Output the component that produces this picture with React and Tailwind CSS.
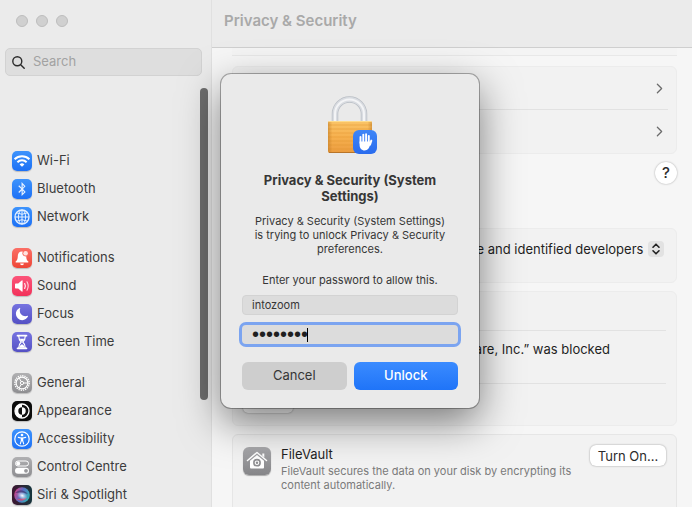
import React, { useState } from "react";
import { FaBluetoothB } from "react-icons/fa";
import { IoMoon } from "react-icons/io5";
import { ChevronRight } from "lucide-react";

const BLUE = "bg-linear-to-b from-[#3d93fc] to-[#1d70f5]";
const PURPLE = "bg-linear-to-b from-[#7673e0] to-[#5450c4]";
const GREY = "bg-linear-to-b from-[#b0b0b2] to-[#8e8e91]";

const WifiGlyph = () => (
   <svg viewBox="0 0 20 20" className="size-5" fill="none" stroke="#fff" strokeWidth="2">
      <path d="M2.6 8.3a10.6 10.6 0 0 1 14.8 0" />
      <path d="M5.4 11.2a6.6 6.6 0 0 1 9.2 0" />
      <path d="M10 15.8 7.6 13.4a3.4 3.4 0 0 1 4.8 0Z" fill="#fff" stroke="none" />
   </svg>
);

const GlobeGlyph = () => (
   <svg viewBox="0 0 20 20" className="size-5" fill="none" stroke="#e6f1ff" strokeWidth="1">
      <circle cx="10" cy="10" r="7" strokeWidth="1.3" />
      <ellipse cx="10" cy="10" rx="3.6" ry="7" />
      <path d="M10 3v14M3 10h14M4.6 5.8q5.4 3 10.8 0M4.6 14.2q5.4-3 10.8 0" />
   </svg>
);

const BellGlyph = () => (
   <svg viewBox="0 0 20 20" className="size-5" fill="#fff">
      <path d="M10 3.4c-3 0-4.1 2.1-4.2 4.8C5.7 11 5.3 12 3.9 13.3c-.6.6-.3 1.3.5 1.3h11.2c.8 0 1.1-.7.5-1.3-1.4-1.3-1.8-2.3-1.9-5.1C14.1 5.5 13 3.4 10 3.4Z" />
      <path d="M8.1 15.5h3.8a1.9 1.7 0 0 1-3.8 0Z" />
      <circle cx="13.6" cy="5.2" r="3.2" fill="#f9695c" />
      <circle cx="13.6" cy="5.2" r="2.3" fill="#ffe3df" />
   </svg>
);

const SoundGlyph = () => (
   <svg viewBox="0 0 20 20" className="size-5" fill="none" stroke="#fff" strokeLinecap="round">
      <path d="M3 8.2q0-.7.7-.7h2.5l3.500-3q.9-.6.9.5v10q0 1.100-.9.500l-3.500-3H3.700q-.7 0-.7-.7Z" fill="#fff" stroke="none" />
      <path d="M12.7 7.5q1.3 2.5 0 5" strokeWidth="1.1" />
      <path d="M15 5.8q2.4 4.2 0 8.4" strokeWidth="1.1" opacity=".75" />
   </svg>
);

const HourglassGlyph = () => (
   <svg viewBox="0 0 20 20" className="size-5" fill="none" stroke="#fff" strokeWidth="1.2">
      <path d="M5.5 3.7h9M5.5 16.3h9" strokeWidth="1.7" strokeLinecap="round" />
      <path d="M6.7 4c0 3.2.7 4.3 2.5 6-1.8 1.7-2.5 2.8-2.5 6M13.3 4c0 3.2-.7 4.3-2.5 6 1.8 1.7 2.5 2.8 2.5 6" />
      <path d="M7.6 6.7h4.8L10 10Z M7.2 15.700c.2-1.500 1-2.400 2.800-3.500 1.800 1.100 2.600 2 2.800 3.500Z" fill="#fff" stroke="none" />
   </svg>
);

const GearGlyph = () => (
   <svg viewBox="0 0 20 20" className="size-5" fill="none" stroke="#fff">
      <circle cx="10" cy="10" r="7.2" strokeWidth="1.4" strokeDasharray="1.3 0.96" />
      <circle cx="10" cy="10" r="5.9" strokeWidth="1.2" />
      <circle cx="10" cy="10" r="1.6" strokeWidth="1" />
      <path d="M11.6 10h4M9.2 8.6 7.2 5.1M9.2 11.4l-2 3.5" strokeWidth="1" />
   </svg>
);

const AppearanceGlyph = () => (
   <svg viewBox="0 0 20 20" className="size-5">
      <circle cx="10" cy="10" r="7" fill="#111" stroke="#fff" strokeWidth="1.3" />
      <path d="M10 3a7 7 0 0 0 0 14Z" fill="#fff" />
      <path d="M10 6.3a3.7 3.7 0 0 0 0 7.4Z" fill="#111" />
      <path d="M10 6.3a3.7 3.7 0 0 1 0 7.4Z" fill="#fff" />
   </svg>
);

const AccessGlyph = () => (
   <svg viewBox="0 0 20 20" className="size-5" fill="none" stroke="#fff" strokeLinecap="round">
      <circle cx="10" cy="10" r="7.2" strokeWidth="1.2" />
      <circle cx="10" cy="6" r="1.3" fill="#fff" stroke="none" />
      <path d="M6.3 8.4 9 9h2l2.7-.6M9.3 9.3v2.4l-1 3.2M10.7 9.3v2.4l1 3.2" strokeWidth="1.1" />
      <path d="M9 8.8h2v3.5H9Z" fill="#fff" stroke="none" />
   </svg>
);

const ControlGlyph = () => (
   <svg viewBox="0 0 20 20" className="size-5">
      <rect x="3.5" y="4" width="13" height="5" rx="2.5" fill="none" stroke="#fff" strokeWidth="1" />
      <circle cx="6.2" cy="6.5" r="2" fill="#fff" />
      <rect x="3" y="10.8" width="14" height="6" rx="3" fill="#fff" />
      <circle cx="14" cy="13.8" r="1.9" fill="#98989b" />
   </svg>
);

const SiriGlyph = () => (
   <svg viewBox="0 0 20 20" className="size-5">
      <defs>
         <linearGradient id="siriOrb" x1="0" y1="0.3" x2="1" y2="0.7">
            <stop offset="0" stopColor="#d83f86" />
            <stop offset=".45" stopColor="#5a6fc4" />
            <stop offset="1" stopColor="#2fb9b4" />
         </linearGradient>
         <radialGradient id="siriCore">
            <stop offset="0" stopColor="#fff" />
            <stop offset="1" stopColor="#bfe4ff" stopOpacity="0" />
         </radialGradient>
      </defs>
      <circle cx="10" cy="10" r="7.8" fill="url(#siriOrb)" />
      <path d="M3 8q6-6 13 1-6-2-13-1Z" fill="#3a2d66" opacity=".6" />
      <path d="M5 14q5 4 10-1-4 .5-10 1Z" fill="#e0486e" opacity=".8" />
      <ellipse cx="10.5" cy="10.5" rx="5.5" ry="4" fill="url(#siriCore)" transform="rotate(25 10 10)" />
   </svg>
);

const HandGlyph = () => (
   <svg viewBox="0 0 24 24" className="size-6" fill="none" stroke="#fff" strokeLinecap="round" strokeLinejoin="round">
      <path d="M7.5 7v6M10.3 4.6V12M13.1 4.2V12M15.8 6v7" strokeWidth="1.9" />
      <path d="m18.3 10.6-1.3 4.2" strokeWidth="2" />
      <path d="M6.6 11.5h10.1l1 1.5-.7 2.3c-.8 3-2.4 5.2-5.3 5.2-3.100 0-5.100-2.500-5.100-5.500Z" fill="#fff" stroke="none" />
   </svg>
);

const LockArt = () => (
   <svg viewBox="0 0 46 58" className="h-[58px] w-[46px]">
      <defs>
         <linearGradient id="brass" x1="0" y1="0" x2="0" y2="1">
            <stop offset="0" stopColor="#fac468" />
            <stop offset=".5" stopColor="#f6b04e" />
            <stop offset="1" stopColor="#eb9c40" />
         </linearGradient>
         <linearGradient id="brassEdge" x1="0" y1="0" x2="1" y2="0">
            <stop offset="0" stopColor="#b87420" stopOpacity=".5" />
            <stop offset=".1" stopColor="#b87420" stopOpacity="0" />
            <stop offset=".9" stopColor="#b87420" stopOpacity="0" />
            <stop offset="1" stopColor="#b87420" stopOpacity=".5" />
         </linearGradient>
      </defs>
      <path d="M8.500 25V17.500a14.500 14.500 0 0 1 29 0V25" transform="translate(-.5 .5)" fill="none" stroke="#b9bec5" strokeWidth="6.500" />
      <path d="M8.500 25V17.500a14.500 14.500 0 0 1 29 0V25" transform="translate(-.5 .5)" fill="none" stroke="#d9dce1" strokeWidth="5" />
      <path d="M8.500 25V17.500a14.500 14.500 0 0 1 29 0V25" transform="translate(-.5 .5)" fill="none" stroke="#f3f4f6" strokeWidth="2" />
      <rect x="1" y="25" width="44" height="32" rx="2" fill="url(#brass)" />
      <path d="M1 29h44M1 33h44M1 37h44M1 41h44M1 45h44M1 49h44M1 53h44" stroke="#dd922f" strokeOpacity=".45" strokeWidth="1" />
      <rect x="1" y="25" width="44" height="32" rx="2" fill="url(#brassEdge)" />
      <path d="M1.5 25.5h43" stroke="#ffdc8c" strokeWidth="1" />
      <path d="M2 56.5h42" stroke="#b8752a" strokeWidth="1" />
   </svg>
);

const VaultGlyph = () => (
   <svg viewBox="0 0 28 28" className="size-7" fill="none" stroke="#fff">
      <path d="M4.5 13.5 14 5.5l9.5 8" strokeWidth="1.5" strokeLinecap="round" strokeLinejoin="round" />
      <path d="M19.3 6.5h2v4l-2-1.7Z" fill="#fff" stroke="none" />
      <path d="M7 13.800 14 8l7 5.800v6.700q0 1-1 1H8q-1 0-1-1Z" fill="#fff" stroke="none" />
      <circle cx="14" cy="15.7" r="3.1" stroke="#8f8f92" strokeWidth="1.6" />
      <circle cx="14" cy="15.7" r="1.2" fill="#8f8f92" stroke="none" />
   </svg>
);

const groups = [
   [
      { label: "Wi-Fi", tile: BLUE, icon: <WifiGlyph /> },
      { label: "Bluetooth", tile: BLUE, icon: <FaBluetoothB size={14} color="#e6f1ff" /> },
      { label: "Network", tile: BLUE, icon: <GlobeGlyph /> },
   ],
   [
      { label: "Notifications", tile: "bg-linear-to-b from-[#fb6f66] to-[#ee4435]", icon: <BellGlyph /> },
      { label: "Sound", tile: "bg-linear-to-b from-[#fc5479] to-[#f2305a]", icon: <SoundGlyph /> },
      { label: "Focus", tile: PURPLE, icon: <IoMoon size={14} color="#fff" /> },
      { label: "Screen Time", tile: PURPLE, icon: <HourglassGlyph /> },
   ],
   [
      { label: "General", tile: GREY, icon: <GearGlyph /> },
      { label: "Appearance", tile: "bg-[#0c0c0c]", icon: <AppearanceGlyph /> },
      { label: "Accessibility", tile: BLUE, icon: <AccessGlyph /> },
      { label: "Control Centre", tile: GREY, icon: <ControlGlyph /> },
      { label: "Siri & Spotlight", tile: "bg-linear-to-r from-[#3a1430] to-[#12343c]", icon: <SiriGlyph /> },
   ],
];

const Sidebar = () => (
   <aside className="relative w-[212px] shrink-0 overflow-hidden border-r border-[#e0e0e0] bg-[#ebebeb]">
      <div className="flex gap-2 px-4 pt-[15px]">
         <button aria-label="Close" className="size-3 rounded-full border border-[#bdbdbd] bg-[#d0d0d0]" />
         <button aria-label="Minimise" className="size-3 rounded-full border border-[#bdbdbd] bg-[#d0d0d0]" />
         <button aria-label="Zoom" className="size-3 rounded-full border border-[#bdbdbd] bg-[#d0d0d0]" />
      </div>
      <label className="mt-[21px] mr-[9px] ml-[5px] flex h-7 items-center gap-2 rounded-[5px] border border-[#d2d2d2] bg-[#dedede] pl-1.5">
         <svg viewBox="0 0 13 13" className="size-[13px] shrink-0" fill="none" stroke="#2c2c2c" strokeWidth="1.4" strokeLinecap="round">
            <circle cx="5.3" cy="5.3" r="4.5" />
            <path d="m8.7 8.7 3.5 3.5" />
         </svg>
         <input
            type="text"
            aria-label="Search"
            placeholder="Search"
            className="w-full min-w-0 bg-transparent text-[13px] outline-none placeholder:text-[#a2a2a2]"
         />
      </label>
      <nav className="mt-[71px] flex flex-col gap-[13px] pl-3">
         {groups.map((group, i) => (
            <ul key={i}>
               {group.map((item) => (
                  <li key={item.label}>
                     <a href="#" className="flex h-7 items-center gap-[5px] text-[13px] text-[#3c3c3c]">
                        <span className={`flex size-5 items-center justify-center rounded-[5px] shadow-[0_1px_1px_rgba(0,0,0,0.2)] ${item.tile}`}>
                           {item.icon}
                        </span>
                        {item.label}
                     </a>
                  </li>
               ))}
            </ul>
         ))}
      </nav>
      <div className="absolute top-[88px] right-[3px] h-[312px] w-2 rounded-full bg-[#6e6e6e]" />
   </aside>
);

const Content = () => (
   <main className="flex min-w-0 flex-1 flex-col bg-[#f6f6f6]">
      <header className="h-12 shrink-0 border-b border-[#cfcfcf] bg-[#ebebeb] px-3 pt-[11px]">
         <h1 className="text-[15px] leading-5 font-semibold text-[#a9a9a9]">Privacy &amp; Security</h1>
      </header>
      <div className="flex flex-col pr-[15px] pl-5">
         <div className="h-2 border-b border-[#e8e8e8] bg-[#f4f4f4]" />
         <section className="mt-2.5 rounded-md border border-[#ececec] bg-[#f2f2f2] pr-2 pl-2.5">
            <button aria-label="Open first row" className="flex h-[43px] w-full items-center justify-end border-b border-[#e2e2e2]">
               <ChevronRight size={17} strokeWidth={1.8} color="#6c6c6c" />
            </button>
            <button aria-label="Open second row" className="flex h-[43px] w-full items-center justify-end">
               <ChevronRight size={17} strokeWidth={1.8} color="#6c6c6c" />
            </button>
         </section>
         <button className="mt-2 size-[22px] self-end rounded-full bg-white text-[15px] leading-[22px] font-medium text-[#2b2b2b] shadow-[0_0_2px_rgba(0,0,0,0.35)]">
            ?
         </button>
         <section className="mt-[44px] flex h-[55px] items-start justify-end rounded-md border border-[#ececec] bg-[#f2f2f2] pt-3 pr-3">
            <div className="relative flex items-center">
               <select
                  aria-label="Allow applications downloaded from"
                  className="h-4 appearance-none bg-transparent pr-5 text-[13px] leading-4 text-[#1f1f1f] outline-none"
               >
                  <option>App Store and identified developers</option>
               </select>
               <span className="pointer-events-none absolute right-0 flex size-4 items-center justify-center rounded-sm bg-[#e2e2e2]">
                  <svg viewBox="0 0 16 16" className="size-4" fill="none" stroke="#222" strokeWidth="1.6" strokeLinecap="round" strokeLinejoin="round">
                     <path d="m5 6.2 3-3 3 3M5 9.8l3 3 3-3" />
                  </svg>
               </span>
            </div>
         </section>
         <section className="mt-2 rounded-md border border-[#ececec] bg-[#f2f2f2] px-2.5">
            <div className="h-[39px] border-b border-[#e2e2e2]" />
            <p className="h-[53px] border-b border-[#e2e2e2] pt-2.5 pr-14 text-right text-[13px] leading-4 text-[#1f1f1f]">
               “VMware, Inc.” was blocked
            </p>
            <div className="h-[41px] pt-2">
               <button aria-label="Allow" className="block h-[21px] w-[50px] rounded-[5px] bg-white shadow-[0_0_2px_rgba(0,0,0,0.4)]" />
            </div>
         </section>
         <section className="mt-2 flex min-h-[84px] items-start rounded-md border border-[#e6e6e6] bg-[#f2f2f2] px-2.5 pt-3">
            <span className="flex size-7 shrink-0 items-center justify-center rounded-md bg-linear-to-b from-[#a9a9ac] to-[#858588] shadow-[0_1px_1px_rgba(0,0,0,0.3)]">
               <VaultGlyph />
            </span>
            <div className="-mt-px ml-2.5 flex-1">
               <h2 className="text-[13px] leading-4 text-[#1f1f1f]">FileVault</h2>
               <p className="mt-0.5 text-[11px] leading-[14px] text-[#7a7a7a]">
                  FileVault secures the data on your disk by encrypting its
                  <br />
                  content automatically.
               </p>
            </div>
            <button className="-mt-0.5 h-[21px] w-[76px] shrink-0 rounded-md bg-white text-[13px] leading-5 text-[#2b2b2b] shadow-[0_0_2px_rgba(0,0,0,0.4)]">
               Turn On...
            </button>
         </section>
      </div>
   </main>
);

const UnlockDialog = () => {
   const [username, setUsername] = useState("intozoom");
   const [password, setPassword] = useState("password");

   return (
      <div className="absolute inset-0 flex items-start justify-center pt-[74px] pl-2">
         <form
            role="dialog"
            aria-labelledby="dialog-title"
            onSubmit={(e) => e.preventDefault()}
            className="flex w-[258px] flex-col rounded-[10px] bg-[#eaeaea] px-[21px] pt-[22px] pb-[18px] text-center text-[#363636] shadow-[0_0_0_1px_rgba(0,0,0,0.3),0_14px_40px_rgba(0,0,0,0.5)]"
         >
            <div className="relative self-center">
               <LockArt />
               <span className="absolute -right-1 bottom-0 flex size-6 items-center justify-center rounded-md bg-linear-to-b from-[#3f86f7] to-[#2a6cee]">
                  <HandGlyph />
               </span>
            </div>
            <h2 id="dialog-title" className="mt-[18px] text-[13px] leading-4 font-bold">
               Privacy &amp; Security (System
               <br />
               Settings)
            </h2>
            <p className="mt-2.5 text-[11px] leading-[14px]">
               Privacy &amp; Security (System Settings)
               <br />
               is trying to unlock Privacy &amp; Security
               <br />
               preferences.
            </p>
            <p className="mt-[17px] text-[11px] leading-[14px]">Enter your password to allow this.</p>
            <input
               type="text"
               aria-label="User name"
               className="mt-2 h-5 w-full rounded-sm border border-[#d3d3d3] bg-[#dcdcdc] px-[9px] text-[11px] outline-none"
               value={username}
               onChange={(e) => setUsername(e.target.value)}
            />
            <div className="relative mt-2.5 flex h-[19px] items-center rounded-sm bg-[#dcdcdc] ring-[3px] ring-[#7ba4f0]">
               <input
                  type="password"
                  aria-label="Password"
                  className="h-[19px] w-full bg-transparent px-2.5 font-['Liberation_Sans',sans-serif] text-[20px] leading-[19px] text-[#1f1f1f] outline-none"
                  value={password}
                  onChange={(e) => setPassword(e.target.value)}
               />
               <span className="absolute left-[65px] h-3.5 w-px bg-black" />
            </div>
            <div className="mt-[18px] flex gap-[7px]">
               <button type="button" className="h-7 flex-1 rounded-md bg-[#cecece] text-[13px]">
                  Cancel
               </button>
               <button type="submit" className="h-7 flex-1 rounded-md bg-linear-to-b from-[#3a8bff] to-[#1f74f8] text-[13px] font-medium text-white">
                  Unlock
               </button>
            </div>
         </form>
      </div>
   );
};

const App = () => {
   return (
      <div className="relative flex h-screen overflow-hidden font-['Inter','Liberation_Sans',sans-serif]">
         <Sidebar />
         <Content />
         <UnlockDialog />
      </div>
   );
};

export default App;
